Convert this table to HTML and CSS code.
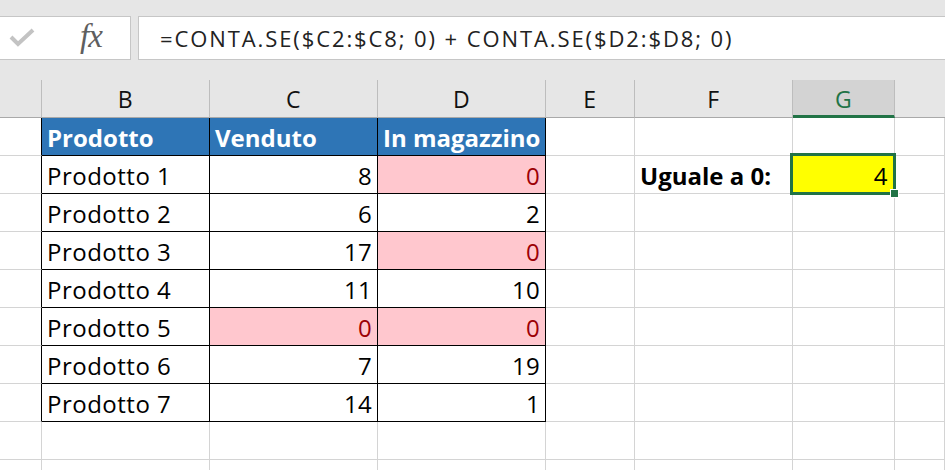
FILE: index.html
```html
<!DOCTYPE html>
<html lang="it">
<head>
<meta charset="utf-8">
<title>CONTA.SE</title>
<link rel="stylesheet" href="styles.css">
</head>
<body>
<div class="app">
  <div class="formula-area">
    <div class="formula-bar">
      <div class="fx-box">
        <svg class="check" width="26" height="22" viewBox="0 0 26 22"><polyline points="2,9 9,16 24,2" fill="none" stroke="#c3c3c3" stroke-width="4"/></svg>
        <span class="fx">fx</span>
      </div>
      <div class="formula-input">=CONTA.SE($C2:$C8; 0) + CONTA.SE($D2:$D8; 0)</div>
    </div>
  </div>
  <div class="sheet">
    <div class="ch"></div><div class="ch">B</div><div class="ch">C</div><div class="ch">D</div><div class="ch">E</div><div class="ch">F</div><div class="ch ch-sel">G</div><div class="ch ch-last"></div>

    <div class="c ta"></div><div class="c t th">Prodotto</div><div class="c t th">Venduto</div><div class="c t th">In magazzino</div><div class="c"></div><div class="c"></div><div class="c"></div><div class="c"></div>

    <div class="c ta"></div><div class="c t">Prodotto 1</div><div class="c t n">8</div><div class="c t n bad">0</div><div class="c"></div><div class="c lbl">Uguale a 0:</div><div class="c res"><span class="res-val">4</span><span class="sel"><span class="handle"></span></span></div><div class="c"></div>

    <div class="c ta"></div><div class="c t">Prodotto 2</div><div class="c t n">6</div><div class="c t n">2</div><div class="c"></div><div class="c"></div><div class="c"></div><div class="c"></div>

    <div class="c ta"></div><div class="c t">Prodotto 3</div><div class="c t n">17</div><div class="c t n bad">0</div><div class="c"></div><div class="c"></div><div class="c"></div><div class="c"></div>

    <div class="c ta"></div><div class="c t">Prodotto 4</div><div class="c t n">11</div><div class="c t n">10</div><div class="c"></div><div class="c"></div><div class="c"></div><div class="c"></div>

    <div class="c ta"></div><div class="c t">Prodotto 5</div><div class="c t n bad">0</div><div class="c t n bad">0</div><div class="c"></div><div class="c"></div><div class="c"></div><div class="c"></div>

    <div class="c ta"></div><div class="c t">Prodotto 6</div><div class="c t n">7</div><div class="c t n">19</div><div class="c"></div><div class="c"></div><div class="c"></div><div class="c"></div>

    <div class="c ta"></div><div class="c t">Prodotto 7</div><div class="c t n">14</div><div class="c t n">1</div><div class="c"></div><div class="c"></div><div class="c"></div><div class="c"></div>

    <div class="c"></div><div class="c"></div><div class="c"></div><div class="c"></div><div class="c"></div><div class="c"></div><div class="c"></div><div class="c"></div>

    <div class="c"></div><div class="c"></div><div class="c"></div><div class="c"></div><div class="c"></div><div class="c"></div><div class="c"></div><div class="c"></div>
  </div>
</div>
</body>
</html>
```

FILE: styles.css
```css
* { box-sizing: border-box; }
html, body { margin: 0; padding: 0; }
body {
  width: 945px;
  height: 470px;
  overflow: hidden;
  background: #fff;
  font-family: "Open Sans", "Noto Sans", sans-serif;
}
.app {
  display: flex;
  flex-direction: column;
  height: 470px;
  overflow: hidden;
}

.formula-area {
  background: #e6e6e6;
  padding-top: 16px;
  height: 80px;
  flex: none;
}
.formula-bar {
  display: flex;
  gap: 7px;
  height: 44px;
}
.fx-box {
  width: 131px;
  background: #fff;
  border-top: 1px solid #c6c6c6;
  border-bottom: 1px solid #c6c6c6;
  border-right: 1px solid #c6c6c6;
  display: flex;
  align-items: center;
  padding-left: 9px;
}
.check { display: block; margin-top: 2px; }
.fx {
  font-family: "Liberation Serif", "DejaVu Serif", serif;
  font-style: italic;
  font-size: 33px;
  color: #5f5f5f;
  margin-left: 45px;
  margin-top: -4px;
  letter-spacing: -1px;
}
.formula-input {
  flex: 1;
  background: #fff;
  border-top: 1px solid #c6c6c6;
  border-bottom: 1px solid #c6c6c6;
  border-left: 1px solid #c6c6c6;
  display: flex;
  align-items: center;
  padding-left: 21px;
  font-size: 22px;
  letter-spacing: 1.9px;
  color: #222;
  white-space: nowrap;
}

.sheet {
  display: grid;
  grid-template-columns: 42px 168px 168px 168px 89px 158px 102px 1fr;
  grid-auto-rows: 38px;
  font-family: "Open Sans", "Noto Sans", sans-serif;
  font-size: 24px;
}
.ch {
  background: #e6e6e6;
  border-right: 1px solid #bdbdbd;
  border-bottom: 1px solid #a9a9a9;
  display: flex;
  align-items: center;
  justify-content: center;
  color: #111;
  font-size: 23px;
  letter-spacing: 0.5px;
}
.ch-sel {
  background: #d3d3d3;
  color: #217346;
  border-bottom: 3px solid #217346;
  padding-top: 2px;
}
.ch-last { border-right: none; }

.c {
  border-right: 1px solid #d4d4d4;
  border-bottom: 1px solid #d4d4d4;
  display: flex;
  align-items: center;
  padding: 1px 5px 0;
  color: #000;
  white-space: nowrap;
  letter-spacing: 0.5px;
}
.ta { border-right-color: #000; }
.t {
  border-right-color: #000;
  border-bottom-color: #000;
}
.th {
  background: #2e75b6;
  color: #fff;
  font-weight: 700;
  letter-spacing: 0;
}
.n { justify-content: flex-end; letter-spacing: 0.3px; }
.bad {
  background: #ffc7ce;
  color: #9c0006;
}
.lbl { font-weight: 700; letter-spacing: 0; }
.res {
  position: relative;
  background: #ffff00;
  justify-content: flex-end;
  padding-right: 6px;
}
.sel {
  position: absolute;
  left: -3px;
  top: -3px;
  right: -2px;
  bottom: -2px;
  border: 3px solid #217346;
}
.handle {
  position: absolute;
  right: -6px;
  bottom: -6px;
  width: 9px;
  height: 9px;
  background: #217346;
  border: 1px solid #fff;
}
```
